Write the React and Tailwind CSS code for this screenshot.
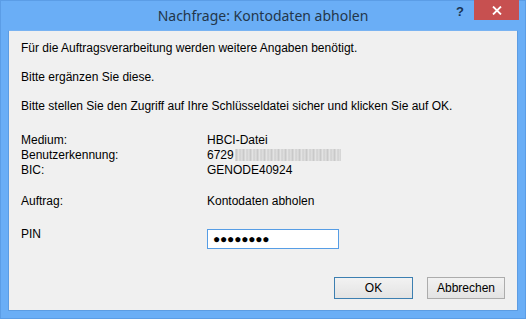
import React from "react";

const font = { fontFamily: '"Liberation Sans", Arial, sans-serif' };

function Row({ label, children, className = "" }) {
  return (
    <div className={`flex leading-[14px] ${className}`}>
      <div className="w-[186px] shrink-0">{label}</div>
      <div>{children}</div>
    </div>
  );
}

export default function App() {
  return (
    <div className="w-[526px] h-[319px] bg-[#6aaef6] border border-[#5b9de6] flex flex-col">
      {/* Title bar */}
      <div className="relative h-[29px] shrink-0">
        <div
          className="absolute inset-x-0 top-[5px] text-center text-[14px] leading-[20px] text-[#23364a]"
          style={{ fontFamily: '"Noto Sans", "Open Sans", sans-serif' }}
        >
          Nachfrage: Kontodaten abholen
        </div>
        <div
          className="absolute left-[455px] top-[3px] text-[13px] font-bold leading-[16px] text-[#1b3553]"
          style={font}
        >
          ?
        </div>
        <div className="absolute left-[473px] -top-px w-[45px] h-[20px] bg-[#c75050] flex items-center justify-center">
          <svg width="10" height="9" viewBox="0 0 10 9">
            <path d="M1 0.5 L9 8.5 M9 0.5 L1 8.5" stroke="#fff" strokeWidth="1.8" />
          </svg>
        </div>
      </div>

      {/* Client area */}
      <div
        className="mx-[7px] h-[281px] bg-[#f0f0f0] border border-[#5c9ce2] border-t-[#79b3f2] flex flex-col pl-[12px] pr-[12px] text-[12px] text-black"
        style={font}
      >
        <p className="leading-[14px] mt-[10px]">Für die Auftragsverarbeitung werden weitere Angaben benötigt.</p>
        <p className="leading-[14px] mt-[15px]">Bitte ergänzen Sie diese.</p>
        <p className="leading-[14px] mt-[15px]">
          Bitte stellen Sie den Zugriff auf Ihre Schlüsseldatei sicher und klicken Sie auf OK.
        </p>

        <Row label="Medium:" className="mt-[20px]">HBCI-Datei</Row>
        <Row label="Benutzerkennung:" className="mt-[1px]">
          <span className="inline-flex items-center">
            6729
            <span className="ml-px inline-block w-[106px] h-[12px] bg-[repeating-linear-gradient(90deg,#d8d8d8_0px,#b8b8b8_2px,#e8e8e8_3px,#c8c8c8_5px,#dedede_7px)] blur-[0.6px] opacity-80" />
          </span>
        </Row>
        <Row label="BIC:" className="mt-[1px]">GENODE40924</Row>

        <Row label="Auftrag:" className="mt-[17px]">Kontodaten abholen</Row>

        <div className="flex mt-[19px]">
          <div className="w-[186px] shrink-0 leading-[14px]">PIN</div>
          <div className="mt-[2px] w-[132px] h-[20px] bg-white border border-[#569de5] flex items-center pl-[5px] text-[12px] tracking-[-0.2px] leading-none">
            ●●●●●●●●
          </div>
        </div>

        <div className="flex justify-end gap-[14px] mt-[28px]">
          <button className="w-[79px] h-[22px] border border-[#3c7fb1] bg-gradient-to-b from-[#f2f2f2] to-[#e3e3e3] text-[12px] leading-none">
            OK
          </button>
          <button className="w-[78px] h-[22px] border border-[#acacac] bg-gradient-to-b from-[#f2f2f2] to-[#e3e3e3] text-[12px] leading-none">
            Abbrechen
          </button>
        </div>
      </div>
    </div>
  );
}
